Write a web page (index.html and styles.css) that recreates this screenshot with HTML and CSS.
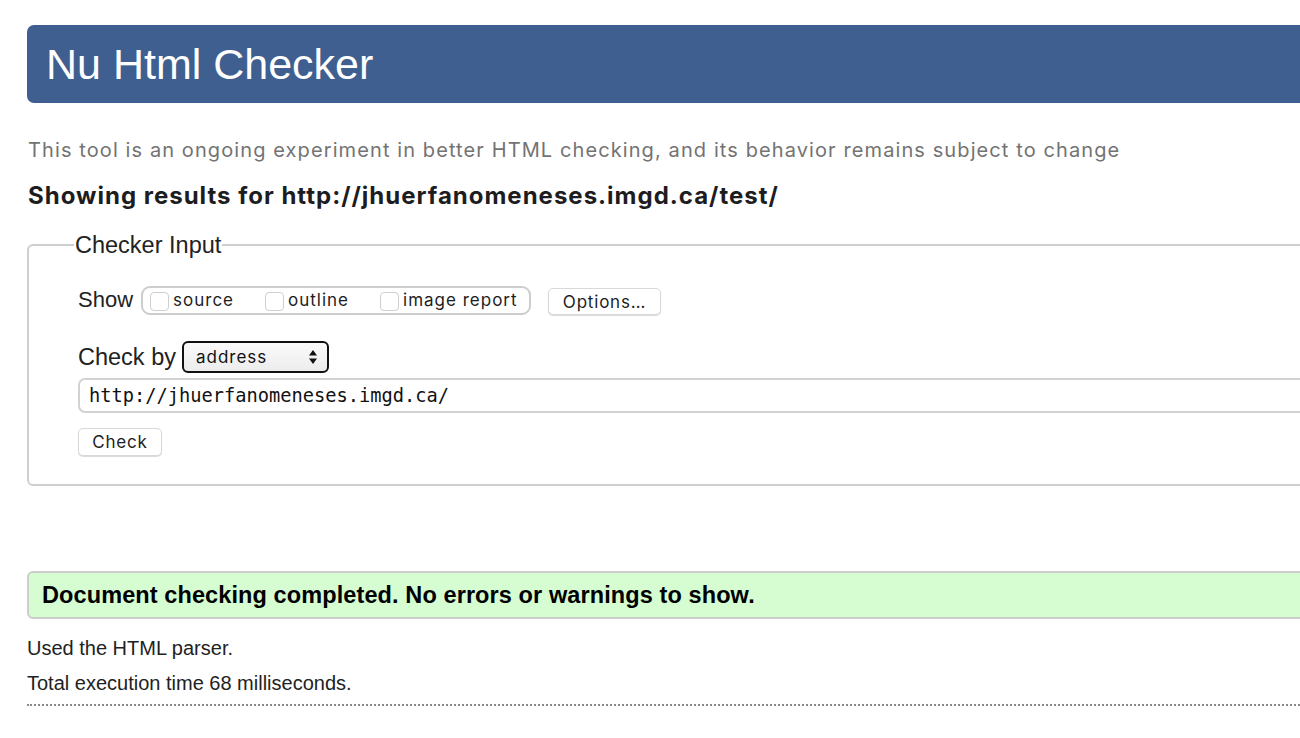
FILE: index.html
```html
<!DOCTYPE html>
<html lang="en">
<head>
<meta charset="utf-8">
<title>Nu Html Checker</title>
<link rel="stylesheet" href="styles.css">
</head>
<body>
<div class="page">
  <header class="banner"><h1 class="title">Nu Html Checker</h1></header>
  <p class="intro">This tool is an ongoing experiment in better HTML checking, and its behavior remains subject to change</p>
  <h2 class="results">Showing results for http://jhuerfanomeneses.imgd.ca/test/</h2>
  <form class="checker">
    <fieldset class="box">
      <legend class="legend">Checker Input</legend>
      <div class="row">
        <span class="label label-show">Show</span>
        <div class="group">
          <label class="opt"><input type="checkbox" class="cb">source</label>
          <label class="opt"><input type="checkbox" class="cb">outline</label>
          <label class="opt"><input type="checkbox" class="cb">image report</label>
        </div>
        <button type="button" class="btn btn-options">Options…</button>
      </div>
      <div class="row row-by">
        <span class="label label-by">Check by</span>
        <span class="select-wrap">
          <select class="select"><option>address</option></select>
          <svg class="arrows" width="10" height="16" viewBox="0 0 10 16"><path d="M5 1 L9 6.5 H1 Z M5 15 L9 9.5 H1 Z" fill="#111"/></svg>
        </span>
      </div>
      <input class="url" type="text" value="http://jhuerfanomeneses.imgd.ca/">
      <button type="button" class="btn btn-check">Check</button>
    </fieldset>
  </form>
  <div class="success">Document checking completed. No errors or warnings to show.</div>
  <p class="meta">Used the HTML parser.</p>
  <p class="meta">Total execution time 68 milliseconds.</p>
  <hr class="dots">
</div>
</body>
</html>
```
FILE: styles.css
```css
html, body {
  margin: 0;
  padding: 0;
  background: #fff;
  overflow: hidden;
}
body {
  font-family: "Liberation Sans", Arial, sans-serif;
  color: #222;
  width: 1300px;
  height: 738px;
}
.page {
  padding: 25px 0 0 27px;
  width: 1400px;
}
.banner {
  height: 78px;
  background: #3e5f8f;
  border-radius: 7px;
  display: flex;
  align-items: center;
  padding-left: 19px;
}
.title {
  margin: 0;
  font-weight: normal;
  font-size: 43px;
  color: #fff;
  line-height: 1;
}
.intro {
  margin: 35px 0 0 1px;
  font-family: Inter, "Noto Sans", sans-serif;
  font-size: 20px;
  letter-spacing: 1.1px;
  line-height: 24px;
  color: #737373;
}
.results {
  margin: 19px 0 0 1px;
  font-family: Inter, "Noto Sans", sans-serif;
  font-size: 24px;
  letter-spacing: 1px;
  font-weight: 700;
  line-height: 30px;
  color: #1d1d1f;
}
.checker {
  margin: 22px 0 0 0;
}
.box {
  margin: 0;
  border: 2px solid #cfcfcf;
  border-radius: 6px;
  padding: 27px 0 28px 49px;
}
.legend {
  font-size: 23.5px;
  color: #222;
  padding: 0 1px;
  margin-left: -4px;
  line-height: 24px;
}
.row {
  display: flex;
  align-items: center;
  height: 32px;
}
.label {
  color: #222;
}
.label-show {
  font-size: 22px;
  margin-right: 8px;
}
.label-by {
  font-size: 23.5px;
  margin-right: 6px;
}
.group {
  display: flex;
  align-items: center;
  height: 25px;
  border: 2px solid #cdcdcd;
  border-radius: 9px;
  padding: 0 0 0 7px;
  width: 379px;
  box-sizing: content-box;
}
.opt {
  display: flex;
  align-items: center;
  font-family: Inter, "Noto Sans", sans-serif;
  font-size: 17px;
  letter-spacing: 1px;
  color: #1d1d1f;
  margin-right: 31px;
}
.opt:last-child { margin-right: 0; }
.cb {
  appearance: none;
  -webkit-appearance: none;
  width: 19px;
  height: 19px;
  margin: 3px 4px 0 0;
  border: 1px solid #cfcfcf;
  border-radius: 4px;
  background: #fff;
}
.btn {
  font-family: Inter, "Noto Sans", sans-serif;
  font-size: 17px;
  letter-spacing: 0.8px;
  color: #1d1d1f;
  background: #fff;
  border: 1px solid #d9d9d9;
  border-radius: 5px;
  box-shadow: 0 1px 1px rgba(0,0,0,0.15);
  padding: 0;
  height: 27px;
}
.btn-options {
  margin-left: 17px;
  margin-top: 3px;
  width: 113px;
}
.row-by {
  margin-top: 25px;
}
.select-wrap {
  position: relative;
  display: inline-block;
  height: 32px;
}
.select {
  appearance: none;
  -webkit-appearance: none;
  width: 147px;
  height: 32px;
  border: 2px solid #111;
  border-radius: 6px;
  background: linear-gradient(#fafafa, #ececec);
  font-family: Inter, "Noto Sans", sans-serif;
  font-size: 17px;
  letter-spacing: 1px;
  color: #111;
  padding: 0 0 0 12px;
  margin: 0;
}
.arrows {
  position: absolute;
  right: 11px;
  top: 8px;
}
.url {
  display: block;
  margin: 5px 0 0 0;
  width: 1300px;
  height: 35px;
  box-sizing: border-box;
  border: 2px solid #d2d2d2;
  border-radius: 7px;
  padding: 0 0 0 9px;
  font-family: "DejaVu Sans Mono", "Liberation Mono", monospace;
  font-size: 18.7px;
  color: #111;
}
.btn-check {
  display: block;
  margin-top: 15px;
  width: 84px;
  height: 28px;
}
.success {
  margin-top: 85px;
  height: 44px;
  display: flex;
  align-items: center;
  background: #d6fcd1;
  border: 2px solid #cdcdcd;
  border-radius: 6px;
  padding-left: 13px;
  font-size: 23.5px;
  letter-spacing: 0.1px;
  font-weight: bold;
  color: #000;
}
.meta {
  margin: 0;
  font-size: 20px;
  line-height: 24px;
  color: #222;
}
.success + .meta { margin-top: 17px; }
.meta + .meta { margin-top: 11px; }
.dots {
  margin: 9px 0 0 0;
  border: 0;
  border-top: 2px dotted #8a8a8a;
  height: 0;
}
```
